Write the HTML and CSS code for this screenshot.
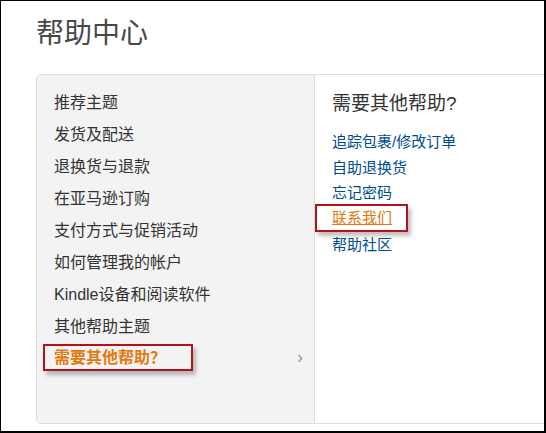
FILE: index.html
```html
<!DOCTYPE html>
<html lang="zh-CN">
<head>
    <meta charset="UTF-8">
    <title>帮助中心</title>
    <link rel="stylesheet" href="styles.css">
</head>
<body>
    <div class="frame">
        <h1 class="title">帮助中心</h1>

        <div class="panel">
            <ul class="topics">
                <li class="topic">推荐主题</li>
                <li class="topic">发货及配送</li>
                <li class="topic">退换货与退款</li>
                <li class="topic">在亚马逊订购</li>
                <li class="topic">支付方式与促销活动</li>
                <li class="topic">如何管理我的帐户</li>
                <li class="topic">Kindle设备和阅读软件</li>
                <li class="topic">其他帮助主题</li>
                <li class="topic topic-active">
                    <span class="mark mark-topic">需要其他帮助？</span>
                    <span class="arrow">›</span>
                </li>
            </ul>

            <div class="more">
                <h2 class="more-title">需要其他帮助?</h2>
                <ul class="links">
                    <li><a href="#">追踪包裹/修改订单</a></li>
                    <li><a href="#">自助退换货</a></li>
                    <li><a href="#">忘记密码</a></li>
                    <li><a href="#" class="mark mark-link">联系我们</a></li>
                    <li><a href="#">帮助社区</a></li>
                </ul>
            </div>
        </div>
    </div>
</body>
</html>
```

FILE: styles.css
```css
body {
    margin: 0;
    background: #fff;
    font-family: "Liberation Sans", "Noto Sans CJK SC", sans-serif;
    color: #333;
}

.frame {
    width: 546px;
    height: 433px;
    box-sizing: border-box;
    border: 1px solid #000;
    border-right-width: 2px;
    border-bottom-width: 2px;
    padding: 17px 0 0 35px;
    overflow: hidden;
}

.title {
    margin: 0;
    height: 56px;
    line-height: 32px;
    font-size: 28px;
    font-weight: normal;
    color: #484848;
}

.panel {
    display: flex;
    width: 530px;
    height: 350px;
    box-sizing: border-box;
    border: 1px solid #dcdcdc;
    border-radius: 5px 0 0 5px;
    overflow: hidden;
}

.topics {
    list-style: none;
    margin: 0;
    width: 278px;
    box-sizing: border-box;
    padding: 10px 11px 0 17px;
    background: #f3f3f3;
    border-right: 1px solid #dcdcdc;
}

.topic {
    display: flex;
    align-items: center;
    justify-content: space-between;
    height: 32px;
    font-size: 16px;
}

.topic-active {
    color: #e47911;
    font-weight: bold;
}

.arrow {
    color: #999;
    font-weight: normal;
    font-size: 18px;
}

/* red callout boxes from the screenshot */
.mark {
    border: 2px solid #b3121c;
    box-shadow: 3px 4px 4px rgba(0, 0, 0, 0.25);
}

.mark-topic {
    line-height: 23px;
    padding: 0 25px 0 9px;
    margin-left: -11px;
}

.more {
    flex: 1;
    padding: 16px 0 0 17px;
    background: #fff;
}

.more-title {
    margin: 0 0 12px;
    line-height: 26px;
    font-size: 19px;
    font-weight: normal;
    color: #333;
}

.links {
    list-style: none;
    margin: 0;
    padding: 0;
    font-size: 15px;
    line-height: 25.7px;
}

.links a {
    color: #004b91;
    text-decoration: none;
}

.links .mark-link {
    display: inline-block;
    vertical-align: top;
    line-height: 24px;
    padding: 0 14px 0 15px;
    margin: -2px 0 -2px -17px;
    color: #e47911;
    text-decoration: underline;
}
```
